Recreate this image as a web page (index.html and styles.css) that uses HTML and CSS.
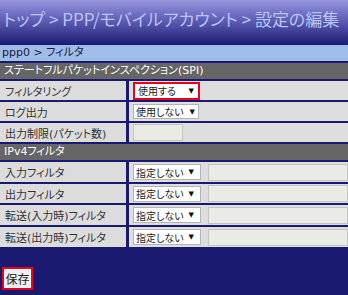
FILE: index.html
```html
<!DOCTYPE html>
<html lang="ja">
<head>
<meta charset="utf-8">
<title>設定の編集</title>
<link rel="stylesheet" href="styles.css">
</head>
<body>
<div class="header"><h1 class="title">トップ &gt; PPP/モバイルアカウント &gt; 設定の編集</h1></div>
<div class="crumb">ppp0 &gt; フィルタ</div>
<div class="form">
  <div class="section">ステートフルパケットインスペクション(SPI)</div>
  <div class="row">
    <div class="label">フィルタリング</div>
    <div class="value"><span class="mark"><span class="sel w-use"><span>使用する</span><span class="arrow">▼</span></span></span></div>
  </div>
  <div class="row">
    <div class="label">ログ出力</div>
    <div class="value"><span class="sel w-use"><span>使用しない</span><span class="arrow">▼</span></span></div>
  </div>
  <div class="row">
    <div class="label">出力制限(パケット数)</div>
    <div class="value"><span class="txt w-short"></span></div>
  </div>
  <div class="section">IPv4フィルタ</div>
  <div class="row tall">
    <div class="label">入力フィルタ</div>
    <div class="value"><span class="sel w-filter"><span>指定しない</span><span class="arrow">▼</span></span><span class="txt w-long"></span></div>
  </div>
  <div class="row">
    <div class="label">出力フィルタ</div>
    <div class="value"><span class="sel w-filter"><span>指定しない</span><span class="arrow">▼</span></span><span class="txt w-long"></span></div>
  </div>
  <div class="row tall">
    <div class="label">転送(入力時)フィルタ</div>
    <div class="value"><span class="sel w-filter"><span>指定しない</span><span class="arrow">▼</span></span><span class="txt w-long"></span></div>
  </div>
  <div class="row tall">
    <div class="label">転送(出力時)フィルタ</div>
    <div class="value"><span class="sel w-filter"><span>指定しない</span><span class="arrow">▼</span></span><span class="txt w-long"></span></div>
  </div>
</div>
<div class="actions"><span class="mark"><button class="save" type="button">保存</button></span></div>
</body>
</html>
```
FILE: styles.css
```css
html, body {
  margin: 0;
  padding: 0;
  background: #191970;
  overflow: hidden;
}
body {
  font-family: "DejaVu Sans", "Noto Sans CJK JP", sans-serif;
  font-size: 11px;
  font-feature-settings: "palt";
  color: #222;
}
.header {
  height: 45px;
  background: linear-gradient(#9696dc 0%, #6a6ac0 35%, #1c1c74 100%);
  display: flex;
  align-items: center;
  padding-left: 3px;
}
.title {
  margin: 0 0 8px 0;
  font-family: "Noto Sans CJK JP", sans-serif;
  font-size: 17px;
  font-weight: normal;
  color: #b8c4f6;
  white-space: nowrap;
}
.crumb {
  height: 16px;
  line-height: 16px;
  background: #9fbde9;
  padding-left: 2px;
  color: #1a1a40;
}
.form {
  display: grid;
  gap: 2px;
  padding-top: 2px;
}
.section {
  height: 16px;
  line-height: 16px;
  background: #666666;
  color: #ffffff;
  padding-left: 4px;
  white-space: nowrap;
}
.row {
  display: grid;
  grid-template-columns: 126px 1fr;
  column-gap: 3px;
  height: 19px;
}
.row.tall {
  height: 20px;
}
.label {
  background: #dcdcdc;
  padding-left: 5px;
  display: flex;
  align-items: center;
  white-space: nowrap;
  color: #333;
}
.value {
  background: #dedede;
  display: flex;
  align-items: center;
  padding-left: 4px;
  gap: 7px;
  overflow: hidden;
  white-space: nowrap;
}
.mark {
  display: inline-flex;
  border: 2px solid #e8001c;
}
.sel {
  display: inline-flex;
  align-items: center;
  justify-content: space-between;
  box-sizing: border-box;
  height: 15px;
  background: #ffffff;
  border: 1px solid #b4b4b4;
  padding: 0 3px 0 2px;
  font-size: 10px;
  color: #222;
}
.arrow {
  font-size: 7px;
  color: #111;
}
.w-use { width: 66px; }
.mark .w-use { width: 63px; height: 14px; border-color: #fff; }
.w-filter { width: 88px; height: 16px; padding-right: 6px; }
.txt {
  display: inline-block;
  box-sizing: border-box;
  background: #ebebe6;
  border: 1px solid #c4c4c0;
  flex: none;
}
.w-short { width: 50px; height: 17px; }
.w-long { width: 140px; height: 17px; }
.actions {
  display: flex;
  padding: 20px 0 0 2px;
}
.save {
  font-family: "Noto Sans CJK JP", sans-serif;
  font-size: 12px;
  height: 19px;
  width: 27px;
  padding: 0;
  margin: 0;
  border: 1px solid #fff;
  background: #efefef;
  color: #222;
  line-height: 17px;
}
```
